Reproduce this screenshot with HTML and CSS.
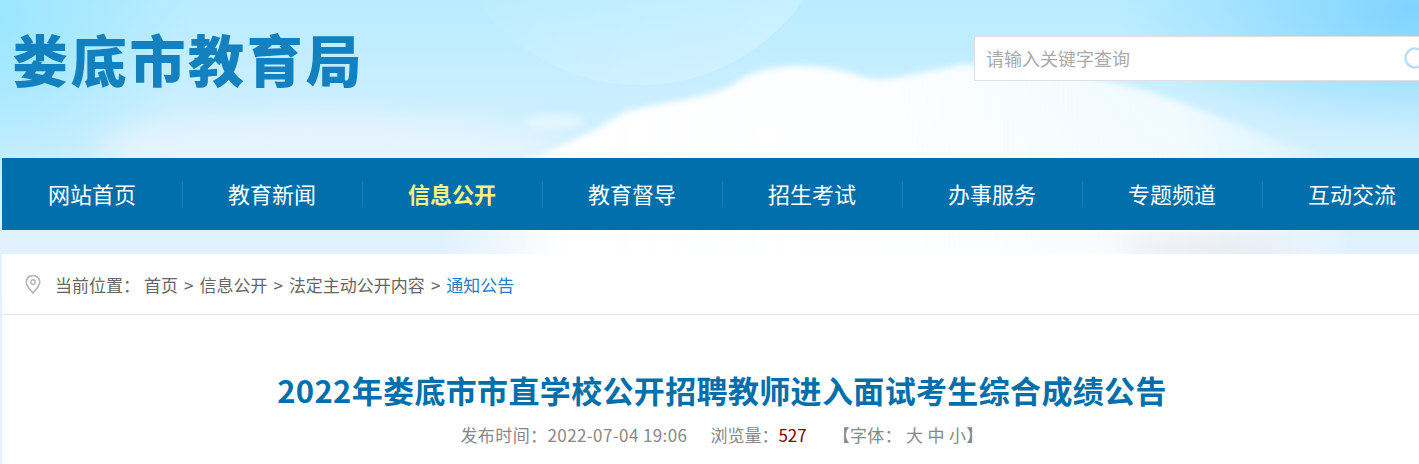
FILE: index.html
```html
<!DOCTYPE html>
<html lang="zh-CN">
<head>
  <meta charset="UTF-8">
  <title>娄底市教育局</title>
  <link rel="stylesheet" href="styles.css">
</head>
<body>
  <svg class="sky" width="1419" height="300" viewBox="0 0 1419 300" aria-hidden="true">
    <defs>
      <linearGradient id="sky-base" x1="0" y1="0" x2="0" y2="1">
        <stop offset="0" stop-color="#b8ecff"/>
        <stop offset="0.5" stop-color="#d3f0ff"/>
        <stop offset="0.85" stop-color="#e2f1ff"/>
      </linearGradient>
      <radialGradient id="corner-left">
        <stop offset="0" stop-color="#9be6ff"/>
        <stop offset="1" stop-color="#9be6ff" stop-opacity="0"/>
      </radialGradient>
      <radialGradient id="corner-right">
        <stop offset="0" stop-color="#7fd3ff"/>
        <stop offset="1" stop-color="#7fd3ff" stop-opacity="0"/>
      </radialGradient>
      <linearGradient id="arc" x1="0" y1="0" x2="1" y2="1">
        <stop offset="0.4" stop-color="#ffffff" stop-opacity="0.02"/>
        <stop offset="1" stop-color="#ffffff" stop-opacity="0.28"/>
      </linearGradient>
      <linearGradient id="cloud-fade" x1="0" y1="0" x2="1" y2="0">
        <stop offset="0" stop-color="#ffffff" stop-opacity="0"/>
        <stop offset="0.14" stop-color="#ffffff"/>
        <stop offset="0.5" stop-color="#ffffff" stop-opacity="0.95"/>
        <stop offset="0.82" stop-color="#ffffff" stop-opacity="0.7"/>
        <stop offset="1" stop-color="#ffffff" stop-opacity="0.1"/>
      </linearGradient>
      <filter id="soft" x="-20%" y="-20%" width="140%" height="140%">
        <feGaussianBlur stdDeviation="3"/>
      </filter>
      <filter id="softer" x="-30%" y="-30%" width="160%" height="160%">
        <feGaussianBlur stdDeviation="14"/>
      </filter>
    </defs>
    <rect width="1419" height="300" fill="url(#sky-base)"/>
    <ellipse cx="0" cy="20" rx="190" ry="190" fill="url(#corner-left)"/>
    <ellipse cx="1419" cy="10" rx="300" ry="130" fill="url(#corner-right)"/>
    <circle cx="640" cy="-115" r="200" fill="url(#arc)"/>
    <ellipse cx="330" cy="150" rx="230" ry="34" fill="#e6f4ff" filter="url(#softer)"/>
    <g filter="url(#soft)" fill="url(#cloud-fade)">
      <path d="M440 185 C500 170 570 148 625 112 C670 100 720 98 742 78 C770 64 815 60 860 76 C885 84 905 74 960 66 C1010 70 1060 70 1110 82 C1170 92 1230 125 1345 165 L1345 262 L440 262 Z"/>
    </g>
    <ellipse cx="555" cy="122" rx="30" ry="8" fill="#ffffff" opacity="0.4" filter="url(#soft)"/>
    <ellipse cx="975" cy="68" rx="22" ry="5" fill="#ffffff" opacity="0.5" filter="url(#soft)"/>
    <ellipse cx="1210" cy="248" rx="90" ry="10" fill="#e4e7ed" filter="url(#softer)"/>
  </svg>

  <div class="page">
    <header class="top">
      <h1 class="logo">娄底市教育局</h1>
      <form class="search">
        <span class="search-hint">请输入关键字查询</span>
        <svg class="search-icon" width="26" height="26" viewBox="0 0 26 26" aria-hidden="true">
          <circle cx="12" cy="12" r="9.500" fill="none" stroke="#b8dff5" stroke-width="2.500"/>
          <path d="M19 19l5 5" stroke="#b8dff5" stroke-width="2.500"/>
        </svg>
      </form>
    </header>

    <nav class="nav">
      <a class="nav-item">网站首页</a>
      <a class="nav-item">教育新闻</a>
      <a class="nav-item active">信息公开</a>
      <a class="nav-item">教育督导</a>
      <a class="nav-item">招生考试</a>
      <a class="nav-item">办事服务</a>
      <a class="nav-item">专题频道</a>
      <a class="nav-item">互动交流</a>
    </nav>

    <main class="panel">
      <div class="crumbs">
        <svg class="pin" width="16" height="19" viewBox="0 0 16 19" aria-hidden="true">
          <path d="M8 18C4 13.500 1.200 10.500 1.200 7.200a6.800 6.800 0 0 1 13.600 0C14.800 10.500 12 13.500 8 18z" fill="none" stroke="#b4b4b4" stroke-width="1.600"/>
          <circle cx="8" cy="7" r="2.200" fill="none" stroke="#b4b4b4" stroke-width="1.400"/>
        </svg>
        <span class="crumbs-label">当前位置：</span>
        <a>首页</a><i>&gt;</i><a>信息公开</a><i>&gt;</i><a>法定主动公开内容</a><i>&gt;</i><a class="current">通知公告</a>
      </div>

      <h2 class="title">2022年娄底市市直学校公开招聘教师进入面试考生综合成绩公告</h2>
      <div class="meta">
        <span class="meta-date">发布时间：2022-07-04 19:06</span>
        <span>浏览量：<b class="views">527</b></span>
        <span class="font-size">【字体： <a>大</a> <a>中</a> <a>小</a>】</span>
      </div>
    </main>
  </div>
</body>
</html>
```

FILE: styles.css
```css
html, body {
  margin: 0;
  height: 464px;
  overflow: hidden;
}

body {
  position: relative;
  background-color: #e4f2ff;
  font-family: "Noto Sans CJK SC", "Liberation Sans", sans-serif;
}

a {
  text-decoration: none;
}

.sky {
  position: absolute;
  top: 0;
  left: 0;
}

.page {
  position: relative;
  width: 1440px;
  margin-left: 2px;
}

.top {
  display: flex;
  align-items: flex-start;
  justify-content: space-between;
  height: 158px;
}

.logo {
  margin: 19px 0 0 10px;
  font-size: 56px;
  letter-spacing: 2.7px;
  line-height: 78px;
  font-weight: 900;
  color: #1380bf;
  white-space: nowrap;
}

.search {
  display: flex;
  align-items: center;
  justify-content: space-between;
  box-sizing: border-box;
  width: 468px;
  height: 45px;
  margin-top: 36px;
  padding: 0 10px 0 11px;
  background-color: white;
  border: 1px solid #e0e0e0;
}

.search-hint {
  font-size: 18px;
  line-height: 24px;
  margin-top: -1px;
  color: #aaa;
}

.search-icon {
  margin-right: 2px;
}

.nav {
  display: flex;
  height: 72px;
  background-color: #006fac;
}

.nav-item {
  position: relative;
  width: 180px;
  line-height: 70px;
  text-align: center;
  font-size: 22px;
  color: white;
}

.nav-item + .nav-item::before {
  content: "";
  position: absolute;
  left: 0;
  top: 23px;
  width: 1px;
  height: 26px;
  background-color: #0a7fbf;
}

.nav-item.active {
  color: #fff27f;
  font-weight: bold;
}

.panel {
  margin-top: 24px;
  height: 230px;
  background-color: white;
}

.crumbs {
  display: flex;
  align-items: center;
  box-sizing: border-box;
  height: 61px;
  padding-left: 23px;
  border-bottom: 1px solid #e5e5e5;
  font-size: 17px;
  color: #666;
}

.pin {
  margin-right: 14px;
}

.crumbs-label {
  margin-right: 4px;
}

.crumbs i {
  margin: 0 6px;
  font-style: normal;
}

.crumbs .current {
  color: #2b7ccb;
}

.title {
  margin: 51px 0 0;
  text-align: center;
  font-size: 31px;
  letter-spacing: 0.35px;
  line-height: 48px;
  font-weight: bold;
  color: #006fac;
}

.meta {
  display: flex;
  justify-content: center;
  gap: 23px;
  margin-top: 9px;
  font-size: 17px;
  line-height: 24px;
  color: #888;
}

.meta-date {
  letter-spacing: 0.4px;
}

.views {
  font-weight: normal;
  color: #800000;
}

.font-size {
  margin-left: 3px;
  letter-spacing: 0.3px;
}
```
